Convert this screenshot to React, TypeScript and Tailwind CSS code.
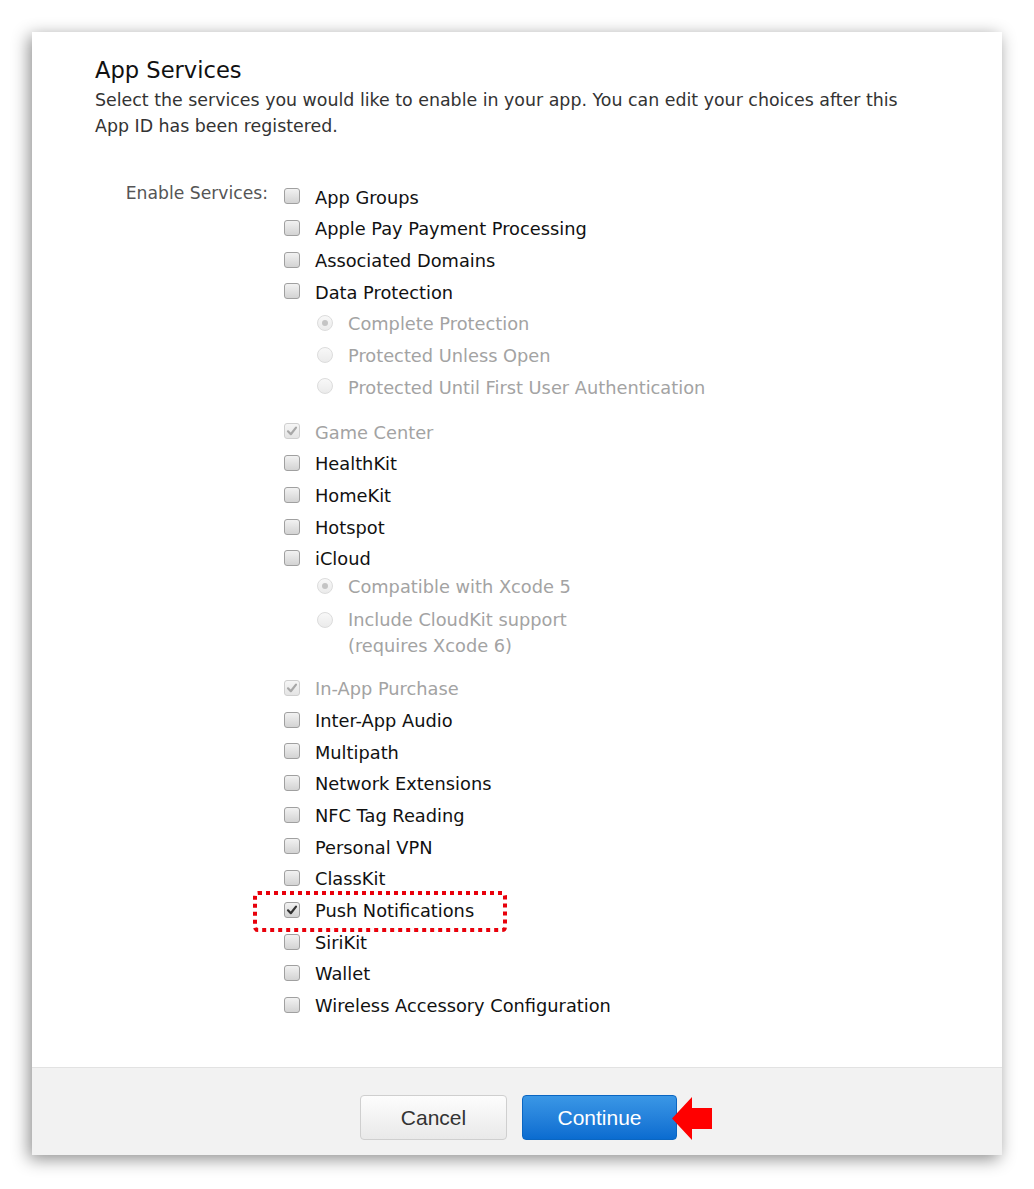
import React from "react";

const FONT = { fontFamily: '"DejaVu Sans", "Noto Sans", sans-serif' };

function Checkbox({ checked = false, disabled = false }: { checked?: boolean; disabled?: boolean }) {
  return (
    <div
      className={`w-[16px] h-[16px] rounded-[3px] border flex items-center justify-center shrink-0 ${
        disabled
          ? "border-[#cfcfcf] bg-gradient-to-b from-[#f6f6f6] to-[#e4e4e4]"
          : "border-[#a0a0a0] bg-gradient-to-b from-[#f2f2f2] to-[#d3d3d3]"
      }`}
    >
      {checked && (
        <svg width="12" height="12" viewBox="0 0 12 12">
          <path
            d="M2 6.3 L4.8 9.2 L10 2.6"
            fill="none"
            stroke={disabled ? "#a8a8a8" : "#333"}
            strokeWidth="2.2"
            strokeLinecap="round"
            strokeLinejoin="round"
          />
        </svg>
      )}
    </div>
  );
}

function Radio({ checked = false }: { checked?: boolean }) {
  return (
    <div className="w-[16px] h-[16px] rounded-full border border-[#dcdcdc] bg-gradient-to-b from-[#f8f8f8] to-[#ebebeb] flex items-center justify-center shrink-0">
      {checked && <div className="w-[6px] h-[6px] rounded-full bg-[#c4c4c4]" />}
    </div>
  );
}

function Row({
  label,
  checked,
  disabled,
  children,
}: {
  label: string;
  checked?: boolean;
  disabled?: boolean;
  children?: React.ReactNode;
}) {
  return (
    <div className="relative h-[31.7px] flex items-center">
      <div className="mt-[-3px]">
        <Checkbox checked={checked} disabled={disabled} />
      </div>
      <span className={`ml-[15px] ${disabled ? "text-[#a3a3a3]" : "text-[#111]"}`}>{label}</span>
      {children}
    </div>
  );
}

function SubRow({ label, checked, className = "" }: { label: string; checked?: boolean; className?: string }) {
  return (
    <div className={`h-[31.7px] flex items-center pl-[33px] ${className}`}>
      <div className="mt-[-3px]">
        <Radio checked={checked} />
      </div>
      <span className="ml-[15px] text-[#a3a3a3]">{label}</span>
    </div>
  );
}

export default function App() {
  return (
    <div className="w-[1034px] h-[1189px] bg-white pt-[32px] px-[32px]" style={FONT}>
      <div className="w-[970px] h-[1123px] bg-white flex flex-col shadow-[-3px_4px_16px_rgba(0,0,0,0.45)]">
        <div className="flex-1 pl-[63px] pt-[24px]">
          <h1 className="text-[22.6px] leading-[28px] text-[#111] font-normal">App Services</h1>
          <p className="text-[17.4px] leading-[26px] text-[#333] mt-[3px]">
            Select the services you would like to enable in your app. You can edit your choices after this
            <br />
            App ID has been registered.
          </p>
          <div className="flex mt-[43px] text-[17.8px]">
            <div className="w-[189px] h-[31.7px] flex items-center justify-end pr-[16px] text-[#555] text-[17.2px] mt-[-4px]">
              Enable Services:
            </div>
            <div className="flex flex-col">
              <Row label="App Groups" />
              <Row label="Apple Pay Payment Processing" />
              <Row label="Associated Domains" />
              <Row label="Data Protection" />
              <SubRow label="Complete Protection" checked />
              <SubRow label="Protected Unless Open" />
              <SubRow label="Protected Until First User Authentication" />
              <div className="h-[13.3px]" />
              <Row label="Game Center" checked disabled />
              <Row label="HealthKit" />
              <Row label="HomeKit" />
              <Row label="Hotspot" />
              <Row label="iCloud" />
              <SubRow label="Compatible with Xcode 5" checked className="mt-[-3.7px]" />
              <div className="flex pl-[33px] pt-[3.15px]">
                <div className="mt-[5px]">
                  <Radio />
                </div>
                <span className="ml-[15px] text-[#a3a3a3] leading-[26px]">
                  Include CloudKit support
                  <br />
                  (requires Xcode 6)
                </span>
              </div>
              <div className="h-[15px]" />
              <Row label="In-App Purchase" checked disabled />
              <Row label="Inter-App Audio" />
              <Row label="Multipath" />
              <Row label="Network Extensions" />
              <Row label="NFC Tag Reading" />
              <Row label="Personal VPN" />
              <Row label="ClassKit" />
              <Row label="Push Notifications" checked>
                <svg
                  className="absolute left-[-31px] top-[-5px]"
                  width="254"
                  height="41"
                  viewBox="0 0 254 41"
                >
                  <rect
                    x="2"
                    y="2"
                    width="250"
                    height="37"
                    rx="3"
                    fill="none"
                    stroke="#e8000b"
                    strokeWidth="4"
                    strokeDasharray="4 4"
                  />
                </svg>
              </Row>
              <Row label="SiriKit" />
              <Row label="Wallet" />
              <Row label="Wireless Accessory Configuration" />
            </div>
          </div>
        </div>
        <div
          className="h-[88px] bg-[#f2f2f2] border-t border-[#e2e2e2] flex items-start justify-center gap-[15px] pt-[27px] pl-[3px] relative"
          style={{ fontFamily: '"Liberation Sans", Arial, sans-serif' }}
        >
          <button className="w-[147px] h-[45px] rounded-[4px] border border-[#cfcfcf] bg-gradient-to-b from-[#fdfdfd] to-[#e9e9e9] text-[#333] text-[21px]">
            Cancel
          </button>
          <div className="relative">
            <button className="w-[155px] h-[45px] rounded-[4px] border border-[#0a66c2] bg-gradient-to-b from-[#3a97e6] to-[#0a6cd0] text-white text-[21px]">
              Continue
            </button>
            <svg className="absolute left-[150px] top-[2px]" width="42" height="43" viewBox="0 0 42 43">
              <polygon points="0,21.5 20,0 20,11 40,11 40,32 20,32 20,43" fill="#ff0000" />
            </svg>
          </div>
        </div>
      </div>
    </div>
  );
}
